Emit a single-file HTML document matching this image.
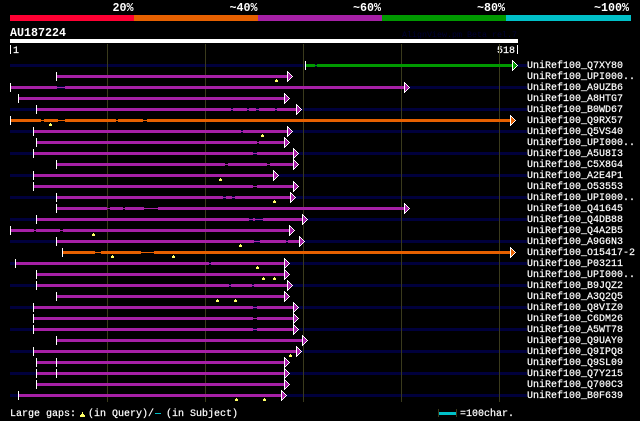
<!DOCTYPE html>
<html><head><meta charset="utf-8"><style>
html,body{margin:0;padding:0;background:#000;width:640px;height:421px;overflow:hidden}
svg{display:block}
text{font-family:"Liberation Mono","DejaVu Sans Mono",monospace;fill:#fff;white-space:pre}
.b{font-size:11.67px;font-weight:bold}
.l text{font-size:10px;stroke:#fff;stroke-width:.2px}
.p{fill:#a620a6}.o{fill:#e66000}.g{fill:#009900}
.k{fill:#fff}.n{fill:#00003c}.y{fill:#ffff66}
</style></head><body>
<svg xmlns="http://www.w3.org/2000/svg" width="640" height="421" viewBox="0 0 640 421" shape-rendering="crispEdges">
<defs>
<g id="ap"><path fill="#fff" d="M0-4h1v1h1v1h1v1h1v1h1v1h1v1h-1v1h-1v1h-1v1h-1v1h-1v1H0z"/><path fill="#a620a6" d="M1-2h1v7H1zM2-1h1v5H2zM3 0h1v3H3zM4 1h1v1H4z"/></g>
<g id="ag"><path fill="#fff" d="M0-4h1v1h1v1h1v1h1v1h1v1h1v1h-1v1h-1v1h-1v1h-1v1h-1v1H0z"/><path fill="#009900" d="M1-2h1v7H1zM2-1h1v5H2zM3 0h1v3H3zM4 1h1v1H4z"/></g>
<g id="ao"><path fill="#fff" d="M0-4h1v1h1v1h1v1h1v1h1v1h1v1h-1v1h-1v1h-1v1h-1v1h-1v1H0z"/><path fill="#e66000" d="M1-2h1v7H1zM2-1h1v5H2zM3 0h1v3H3zM4 1h1v1H4z"/></g>
<path id="m" d="M1 4h1v1h-1zM0 5h3v2H0z" fill="#ffff66"/>
</defs>
<rect x="10" y="15" width="124" height="6" fill="#ff0033"/>
<rect x="134" y="15" width="124" height="6" fill="#e66000"/>
<rect x="258" y="15" width="124" height="6" fill="#a620a6"/>
<rect x="382" y="15" width="124" height="6" fill="#009900"/>
<rect x="506" y="15" width="125" height="6" fill="#00c0c8"/>
<text class="b" x="112.5" y="11">20%</text>
<text class="b" x="229.5" y="11">~40%</text>
<text class="b" x="353" y="11">~60%</text>
<text class="b" x="477" y="11">~80%</text>
<text class="b" x="594" y="11">~100%</text>
<text class="b" x="10" y="36">AU187224</text>
<text x="402" y="37" font-size="8.33" style="fill:#000033">AlignView.pm Beta rel.7</text>
<rect x="10" y="39" width="508" height="4" fill="#fff"/>
<rect x="10" y="45" width="1" height="9" fill="#fff"/>
<rect x="517" y="45" width="1" height="9" fill="#fff"/>
<g class="l"><text x="13" y="53">1</text>
<text x="497" y="53">518</text></g>
<g class="n">
<rect x="10" y="64" width="517" height="3"/><rect x="10" y="86" width="517" height="3"/><rect x="10" y="108" width="517" height="3"/><rect x="10" y="130" width="517" height="3"/><rect x="10" y="152" width="517" height="3"/><rect x="10" y="174" width="517" height="3"/><rect x="10" y="196" width="517" height="3"/><rect x="10" y="218" width="517" height="3"/><rect x="10" y="240" width="517" height="3"/><rect x="10" y="262" width="517" height="3"/><rect x="10" y="284" width="517" height="3"/><rect x="10" y="306" width="517" height="3"/><rect x="10" y="328" width="517" height="3"/><rect x="10" y="350" width="517" height="3"/><rect x="10" y="372" width="517" height="3"/><rect x="10" y="394" width="517" height="3"/>
</g>
<g fill="#3a3a1c">
<rect x="107" y="44" width="1" height="358"/><rect x="205" y="44" width="1" height="358"/><rect x="303" y="44" width="1" height="358"/><rect x="401" y="44" width="1" height="358"/><rect x="499" y="44" width="1" height="358"/>
</g>
<g transform="translate(0,64)"><path class="g" d="M306 0h9v3h-9zM315 1h2v1h-2zM317 0h195v3H317z"/><rect class="k" x="305" y="-3" width="1" height="9"/><use href="#ag" x="512"/></g>
<g transform="translate(0,75)"><path class="p" d="M57 0h231v3H57z"/><rect class="k" x="56" y="-3" width="1" height="9"/><use href="#ap" x="287"/><use href="#m" x="275"/></g>
<g transform="translate(0,86)"><path class="p" d="M11 0h46v3H11zM57 1h8v1h-8zM65 0h340v3H65z"/><rect class="k" x="10" y="-3" width="1" height="9"/><use href="#ap" x="404"/></g>
<g transform="translate(0,97)"><path class="p" d="M19 0h266v3H19z"/><rect class="k" x="18" y="-3" width="1" height="9"/><use href="#ap" x="284"/></g>
<g transform="translate(0,108)"><path class="p" d="M37 0h194v3H37zM231 1h2v1h-2zM233 0h14v3h-14zM247 1h2v1h-2zM249 0h7v3h-7zM256 1h3v1h-3zM259 0h16v3h-16zM275 1h2v1h-2zM277 0h20v3h-20z"/><rect class="k" x="36" y="-3" width="1" height="9"/><use href="#ap" x="296"/></g>
<g transform="translate(0,119)"><path class="o" d="M11 0h30v3H11zM41 1h3v1h-3zM44 0h14v3H44zM58 1h7v1h-7zM65 0h51v3H65zM116 1h2v1h-2zM118 0h25v3h-25zM143 1h4v1h-4zM147 0h364v3H147z"/><rect class="k" x="10" y="-3" width="1" height="9"/><use href="#ao" x="510"/><use href="#m" x="49"/></g>
<g transform="translate(0,130)"><path class="p" d="M34 0h207v3H34zM241 1h2v1h-2zM243 0h45v3h-45z"/><rect class="k" x="33" y="-3" width="1" height="9"/><use href="#ap" x="287"/><use href="#m" x="261"/></g>
<g transform="translate(0,141)"><path class="p" d="M37 0h220v3H37zM257 1h2v1h-2zM259 0h26v3h-26z"/><rect class="k" x="36" y="-3" width="1" height="9"/><use href="#ap" x="284"/></g>
<g transform="translate(0,152)"><path class="p" d="M34 0h219v3H34zM253 1h4v1h-4zM257 0h37v3h-37z"/><rect class="k" x="33" y="-3" width="1" height="9"/><use href="#ap" x="293"/></g>
<g transform="translate(0,163)"><path class="p" d="M57 0h168v3H57zM225 1h3v1h-3zM228 0h39v3h-39zM267 1h3v1h-3zM270 0h24v3h-24z"/><rect class="k" x="56" y="-3" width="1" height="9"/><use href="#ap" x="293"/></g>
<g transform="translate(0,174)"><path class="p" d="M34 0h240v3H34z"/><rect class="k" x="33" y="-3" width="1" height="9"/><use href="#ap" x="273"/><use href="#m" x="219"/></g>
<g transform="translate(0,185)"><path class="p" d="M34 0h219v3H34zM253 1h4v1h-4zM257 0h37v3h-37z"/><rect class="k" x="33" y="-3" width="1" height="9"/><use href="#ap" x="293"/></g>
<g transform="translate(0,196)"><path class="p" d="M57 0h166v3H57zM223 1h3v1h-3zM226 0h6v3h-6zM232 1h3v1h-3zM235 0h56v3h-56z"/><rect class="k" x="56" y="-3" width="1" height="9"/><use href="#ap" x="290"/><use href="#m" x="273"/></g>
<g transform="translate(0,207)"><path class="p" d="M57 0h50v3H57zM107 1h3v1h-3zM110 0h13v3h-13zM123 1h2v1h-2zM125 0h19v3h-19zM144 1h14v1h-14zM158 0h247v3H158z"/><rect class="k" x="56" y="-3" width="1" height="9"/><use href="#ap" x="404"/></g>
<g transform="translate(0,218)"><path class="p" d="M37 0h212v3H37zM249 1h4v1h-4zM253 0h2v3h-2zM255 1h8v1h-8zM263 0h40v3h-40z"/><rect class="k" x="36" y="-3" width="1" height="9"/><use href="#ap" x="302"/></g>
<g transform="translate(0,229)"><path class="p" d="M11 0h23v3H11zM34 1h2v1h-2zM36 0h24v3H36zM60 1h3v1h-3zM63 0h227v3H63z"/><rect class="k" x="10" y="-3" width="1" height="9"/><use href="#ap" x="289"/><use href="#m" x="92"/></g>
<g transform="translate(0,240)"><path class="p" d="M57 0h197v3H57zM254 1h6v1h-6zM260 0h26v3h-26zM286 1h2v1h-2zM288 0h12v3h-12z"/><rect class="k" x="56" y="-3" width="1" height="9"/><use href="#ap" x="299"/><use href="#m" x="239"/></g>
<g transform="translate(0,251)"><path class="o" d="M63 0h32v3H63zM95 1h6v1h-6zM101 0h40v3h-40zM141 1h13v1h-13zM154 0h357v3H154z"/><rect class="k" x="62" y="-3" width="1" height="9"/><use href="#ao" x="510"/><use href="#m" x="111"/><use href="#m" x="172"/></g>
<g transform="translate(0,262)"><path class="p" d="M16 0h193v3H16zM209 1h2v1h-2zM211 0h74v3h-74z"/><rect class="k" x="15" y="-3" width="1" height="9"/><use href="#ap" x="284"/><use href="#m" x="256"/></g>
<g transform="translate(0,273)"><path class="p" d="M37 0h248v3H37z"/><rect class="k" x="36" y="-3" width="1" height="9"/><use href="#ap" x="284"/><use href="#m" x="262"/><use href="#m" x="273"/></g>
<g transform="translate(0,284)"><path class="p" d="M37 0h192v3H37zM229 1h2v1h-2zM231 0h21v3h-21zM252 1h2v1h-2zM254 0h34v3h-34z"/><rect class="k" x="36" y="-3" width="1" height="9"/><use href="#ap" x="287"/></g>
<g transform="translate(0,295)"><path class="p" d="M57 0h228v3H57z"/><rect class="k" x="56" y="-3" width="1" height="9"/><use href="#ap" x="284"/><use href="#m" x="216"/><use href="#m" x="234"/></g>
<g transform="translate(0,306)"><path class="p" d="M34 0h219v3H34zM253 1h4v1h-4zM257 0h37v3h-37z"/><rect class="k" x="33" y="-3" width="1" height="9"/><use href="#ap" x="293"/></g>
<g transform="translate(0,317)"><path class="p" d="M34 0h219v3H34zM253 1h4v1h-4zM257 0h37v3h-37z"/><rect class="k" x="33" y="-3" width="1" height="9"/><use href="#ap" x="293"/></g>
<g transform="translate(0,328)"><path class="p" d="M34 0h219v3H34zM253 1h4v1h-4zM257 0h37v3h-37z"/><rect class="k" x="33" y="-3" width="1" height="9"/><use href="#ap" x="293"/></g>
<g transform="translate(0,339)"><path class="p" d="M57 0h246v3H57z"/><rect class="k" x="56" y="-3" width="1" height="9"/><use href="#ap" x="302"/></g>
<g transform="translate(0,350)"><path class="p" d="M34 0h263v3H34z"/><rect class="k" x="33" y="-3" width="1" height="9"/><use href="#ap" x="296"/><use href="#m" x="289"/></g>
<g transform="translate(0,361)"><path class="p" d="M37 0h248v3H37z"/><rect class="k" x="36" y="-3" width="1" height="9"/><rect class="k" x="56" y="-3" width="1" height="9"/><use href="#ap" x="284"/></g>
<g transform="translate(0,372)"><path class="p" d="M37 0h248v3H37z"/><rect class="k" x="36" y="-3" width="1" height="9"/><rect class="k" x="56" y="-3" width="1" height="9"/><use href="#ap" x="284"/></g>
<g transform="translate(0,383)"><path class="p" d="M37 0h248v3H37z"/><rect class="k" x="36" y="-3" width="1" height="9"/><use href="#ap" x="284"/></g>
<g transform="translate(0,394)"><path class="p" d="M19 0h263v3H19z"/><rect class="k" x="18" y="-3" width="1" height="9"/><use href="#ap" x="281"/><use href="#m" x="235"/><use href="#m" x="263"/></g>
<g class="l">
<text x="527" y="68">UniRef100_Q7XY80</text>
<text x="527" y="79">UniRef100_UPI000..</text>
<text x="527" y="90">UniRef100_A9UZB6</text>
<text x="527" y="101">UniRef100_A8HTG7</text>
<text x="527" y="112">UniRef100_B0WD67</text>
<text x="527" y="123">UniRef100_Q9RX57</text>
<text x="527" y="134">UniRef100_Q5VS40</text>
<text x="527" y="145">UniRef100_UPI000..</text>
<text x="527" y="156">UniRef100_A5U8I3</text>
<text x="527" y="167">UniRef100_C5X8G4</text>
<text x="527" y="178">UniRef100_A2E4P1</text>
<text x="527" y="189">UniRef100_O53553</text>
<text x="527" y="200">UniRef100_UPI000..</text>
<text x="527" y="211">UniRef100_Q41645</text>
<text x="527" y="222">UniRef100_Q4DB88</text>
<text x="527" y="233">UniRef100_Q4A2B5</text>
<text x="527" y="244">UniRef100_A9G6N3</text>
<text x="527" y="255">UniRef100_O15417-2</text>
<text x="527" y="266">UniRef100_P03211</text>
<text x="527" y="277">UniRef100_UPI000..</text>
<text x="527" y="288">UniRef100_B9JQZ2</text>
<text x="527" y="299">UniRef100_A3Q2Q5</text>
<text x="527" y="310">UniRef100_Q8VIZ0</text>
<text x="527" y="321">UniRef100_C6DM26</text>
<text x="527" y="332">UniRef100_A5WT78</text>
<text x="527" y="343">UniRef100_Q9UAY0</text>
<text x="527" y="354">UniRef100_Q9IPQ8</text>
<text x="527" y="365">UniRef100_Q9SL09</text>
<text x="527" y="376">UniRef100_Q7Y215</text>
<text x="527" y="387">UniRef100_Q700C3</text>
<text x="527" y="398">UniRef100_B0F639</text>
<text x="10" y="416">Large gaps:</text>
<text x="88" y="416">(in Query)/</text>
<text x="166" y="416">(in Subject)</text>
<text x="460" y="416">=100char.</text>
</g>
<path d="M82 412h1v2h-1zM81 414h3v1h-3zM80 415h5v2h-5z" fill="#ffff66"/>
<rect x="155" y="413" width="6" height="1" fill="#00c0c8"/>
<rect x="439" y="412" width="17" height="3" fill="#00c0c8"/>
<rect x="438" y="409" width="1" height="8" fill="#3a3a1c"/>
<rect x="456" y="409" width="1" height="8" fill="#3a3a1c"/>
</svg>
</body></html>
